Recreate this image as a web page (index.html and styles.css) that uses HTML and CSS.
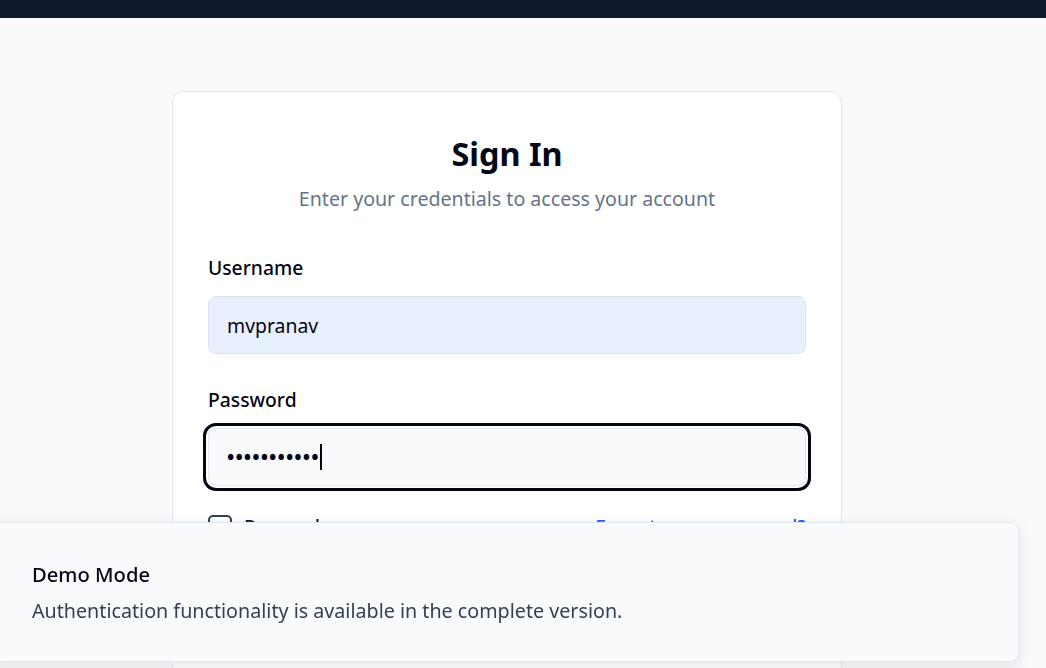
FILE: index.html
```html
<!DOCTYPE html>
<html lang="en">
<head>
<meta charset="utf-8">
<title>Sign In</title>
<link rel="stylesheet" href="styles.css">
</head>
<body>
<header class="topbar"></header>
<main class="page">
  <section class="card">
    <div class="card-head">
      <h1 class="title">Sign In</h1>
      <p class="subtitle">Enter your credentials to access your account</p>
    </div>
    <form class="form">
      <div class="field">
        <label class="label">Username</label>
        <div class="input input-autofill">mvpranav</div>
      </div>
      <div class="field">
        <label class="label">Password</label>
        <div class="input input-focus"><span class="dots">•••••••••••</span><span class="caret"></span></div>
      </div>
      <div class="row">
        <label class="remember"><span class="checkbox"></span>Remember me</label>
        <a class="link" href="#">Forgot your password?</a>
      </div>
    </form>
  </section>
</main>
<div class="toast">
  <div class="toast-title">Demo Mode</div>
  <div class="toast-desc">Authentication functionality is available in the complete version.</div>
</div>
</body>
</html>
```
FILE: styles.css
```css
* { box-sizing: border-box; }
html, body { margin: 0; padding: 0; }
body {
  font-family: "Noto Sans", "Open Sans", sans-serif;
  background: #f8fafc;
  color: #0f172a;
  overflow: hidden;
  height: 668px;
}
.topbar {
  height: 18px;
  background: #0f172a;
}
.page {
  padding: 73px 0 0 172px;
}
.card {
  width: 670px;
  background: #ffffff;
  border: 1px solid #e2e8f0;
  border-radius: 12px;
  padding: 41px 35px 40px;
  min-height: 700px;
}
.card-head {
  text-align: center;
}
.title {
  margin: 0;
  font-size: 32.4px;
  line-height: 40px;
  font-weight: 700;
  color: #020617;
}
.subtitle {
  margin: 12px 0 0;
  font-size: 19.6px;
  line-height: 28px;
  color: #64748b;
}
.form {
  margin-top: 41px;
  display: flex;
  flex-direction: column;
}
.field {
  display: flex;
  flex-direction: column;
  gap: 14px;
  margin-bottom: 32px;
}
.field + .field { margin-bottom: 28px; }
.label {
  font-size: 19.3px;
  line-height: 28px;
  font-weight: 500;
  color: #020617;
}
.input {
  height: 58px;
  border: 1px solid #e2e8f0;
  border-radius: 8px;
  padding: 0 18px;
  display: flex;
  align-items: center;
  font-size: 19.4px;
  color: #020617;
  background: #f8fafc;
}
.input-autofill {
  background: #e8f0fe;
  border-color: #dbe3ef;
}
.input-focus {
  outline: 3px solid #020617;
  outline-offset: 2px;
}
.dots {
  font-size: 19.6px;
  letter-spacing: 1.05px;
  font-weight: 700;
  line-height: 1;
}
.caret {
  display: inline-block;
  width: 2px;
  height: 26px;
  background: #020617;
  margin-left: 0;
}
.row {
  display: flex;
  justify-content: space-between;
  align-items: center;
  height: 24px;
}
.remember {
  display: flex;
  align-items: center;
  gap: 12px;
  font-size: 19.3px;
  font-weight: 500;
}
.checkbox {
  width: 24px;
  height: 22px;
  border: 2px solid #334155;
  border-radius: 5px;
  background: #fff;
}
.link {
  color: #2563eb;
  text-decoration: none;
  font-size: 19.3px;
  font-weight: 500;
}
.toast {
  position: fixed;
  left: -12px;
  right: 27px;
  top: 522px;
  height: 140px;
  background: #f8fafc;
  border: 1px solid #e2e8f0;
  border-radius: 8px;
  box-shadow: 0 4px 14px rgba(15, 23, 42, 0.10);
  padding: 0 32px 0 43px;
  display: flex;
  flex-direction: column;
  justify-content: center;
  gap: 9px;
}
.toast-title {
  font-size: 20.2px;
  line-height: 28px;
  font-weight: 500;
  color: #020617;
}
.toast-desc {
  font-size: 19.7px;
  line-height: 28px;
  color: #334155;
}
```
